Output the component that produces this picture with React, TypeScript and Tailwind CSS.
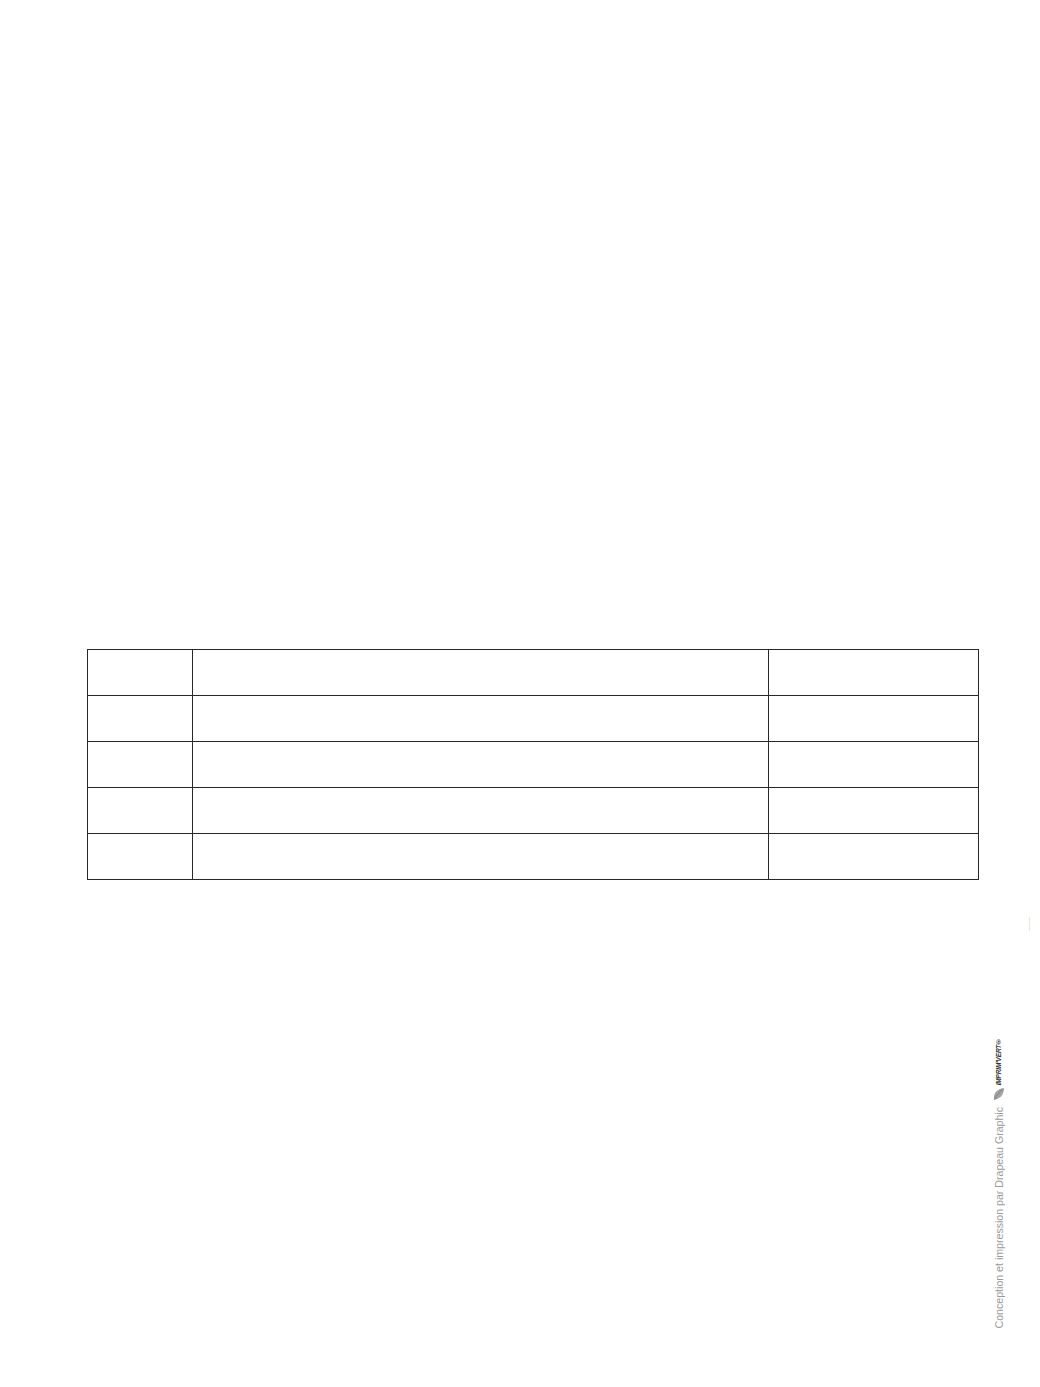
import React from 'react';

const rows = [0, 1, 2, 3, 4];

function ImprimVertLogo() {
  return (
    <div className="flex flex-col items-center">
      <span className="[writing-mode:vertical-rl] rotate-180 text-[6.5px] font-bold italic leading-none tracking-tight text-[#333333] [font-family:'Liberation_Sans',Arial,sans-serif]">
        IMPRIM&apos;VERT®
      </span>
      <svg width="14" height="14" viewBox="0 0 14 14" className="mt-[2px]" aria-hidden="true">
        <path d="M12 1 C5 2 1 6 2 13 C7 12 12 9 12 1 Z" fill="#a3a3a3" />
        <path d="M11 2 C7 5 5 8 2.5 12.5" stroke="#7a7a7a" strokeWidth="0.8" fill="none" />
      </svg>
    </div>
  );
}

export default function App() {
  return (
    <div className="relative w-[1040px] h-[1387px] bg-white overflow-hidden [font-family:'Liberation_Sans',Arial,sans-serif]">
      <div className="pt-[649px] pl-[87px]">
        <table className="border-collapse w-[891px] table-fixed">
          <colgroup>
            <col className="w-[105px]" />
            <col className="w-[576px]" />
            <col className="w-[210px]" />
          </colgroup>
          <tbody>
            {rows.map((r) => (
              <tr key={r} className="h-[46px]">
                <td className="border border-[#2b2723]" />
                <td className="border border-[#2b2723]" />
                <td className="border border-[#2b2723]" />
              </tr>
            ))}
          </tbody>
        </table>
      </div>

      {/* petite marque verte en marge */}
      <div className="absolute left-[1029px] top-[917px] w-px h-[14px] bg-[#dcefd3]" />

      {/* crédit d'impression vertical */}
      <div className="absolute left-[990px] top-[1038px] flex flex-col items-center w-[18px]">
        <ImprimVertLogo />
        <span className="mt-[6px] [writing-mode:vertical-rl] rotate-180 text-[10.6px] font-light leading-none text-[#9a9a9a] whitespace-nowrap">
          Conception et impression par Drapeau Graphic
        </span>
      </div>
    </div>
  );
}
